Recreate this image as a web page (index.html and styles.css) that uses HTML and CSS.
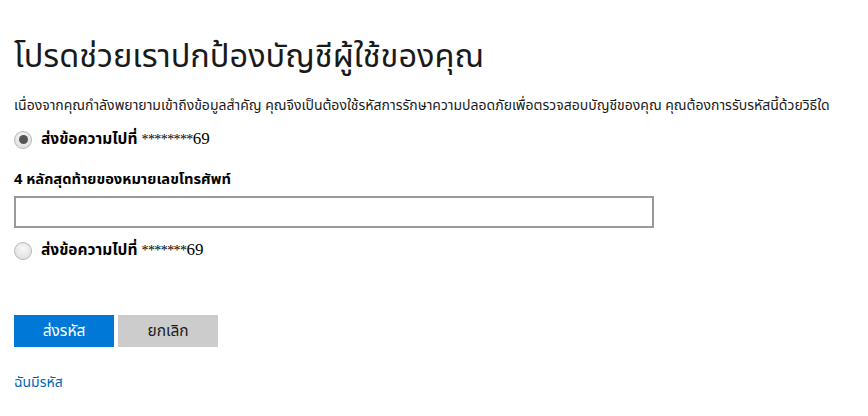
FILE: index.html
```html
<!DOCTYPE html>
<html lang="th">
<head>
<meta charset="utf-8">
<link rel="stylesheet" href="styles.css">
</head>
<body>
<main class="page">
  <h1 class="title">โปรดช่วยเราปกป้องบัญชีผู้ใช้ของคุณ</h1>
  <p class="desc">เนื่องจากคุณกำลังพยายามเข้าถึงข้อมูลสำคัญ คุณจึงเป็นต้องใช้รหัสการรักษาความปลอดภัยเพื่อตรวจสอบบัญชีของคุณ คุณต้องการรับรหัสนี้ด้วยวิธีใด</p>
  <label class="option option1">
    <span class="radio checked"></span>
    <span class="opt-text"><b>ส่งข้อความไปที่</b> <span class="num"><span class="stars">********</span>69</span></span>
  </label>
  <div class="field">
    <div class="field-label">4 หลักสุดท้ายของหมายเลขโทรศัพท์</div>
    <div class="input"></div>
  </div>
  <label class="option option2">
    <span class="radio"></span>
    <span class="opt-text"><b>ส่งข้อความไปที่</b> <span class="num"><span class="stars">*******</span>69</span></span>
  </label>
  <div class="buttons">
    <button class="btn primary">ส่งรหัส</button>
    <button class="btn secondary">ยกเลิก</button>
  </div>
  <a class="link" href="#">ฉันมีรหัส</a>
</main>
</body>
</html>
```
FILE: styles.css
```css
html, body {
  margin: 0;
  padding: 0;
  background: #fff;
}
body {
  font-family: "Noto Sans Thai", "Noto Sans", "DejaVu Sans", "Liberation Sans", sans-serif;
  color: #000;
}
.page {
  padding: 0 14px;
  display: flex;
  flex-direction: column;
  align-items: flex-start;
}
.title {
  margin: 34px 0 0;
  font-size: 32.5px;
  font-weight: 400;
  line-height: 48px;
  color: #1a1a1a;
}
.desc {
  margin: 14px 0 0;
  font-size: 14px;
  line-height: 20px;
  color: #1a1a1a;
}
.option {
  display: flex;
  align-items: center;
  gap: 9px;
  line-height: 20px;
}
.option1 { margin-top: 13px; }
.option2 { margin-top: 12px; }
.radio {
  width: 18px;
  height: 18px;
  box-sizing: border-box;
  border-radius: 50%;
  border: 1px solid #b8b8b8;
  background: radial-gradient(circle at 50% 35%, #f8f8f8, #dadada);
  display: flex;
  align-items: center;
  justify-content: center;
  flex: none;
}
.radio.checked::after {
  content: "";
  width: 9px;
  height: 9px;
  border-radius: 50%;
  background: #555;
}
.opt-text b {
  font-size: 15.5px;
  font-weight: 700;
}
.num {
  font-family: "Liberation Serif", serif;
  font-size: 17px;
}
.stars {
  font-size: 14px;
  letter-spacing: -0.6px;
}
.field {
  margin-top: 20px;
  display: flex;
  flex-direction: column;
  gap: 6px;
}
.field-label {
  font-size: 14.7px;
  font-weight: 700;
  line-height: 20px;
}
.input {
  width: 640px;
  height: 32px;
  box-sizing: border-box;
  border: 2px solid #999;
  background: #fff;
}
.buttons {
  margin-top: 54px;
  display: flex;
  gap: 4px;
}
.btn {
  width: 100px;
  height: 32px;
  border: none;
  font-family: inherit;
  font-size: 15.5px;
  padding: 0;
}
.primary { background: #0078d7; color: #fff; }
.secondary { background: #ccc; color: #1a1a1a; }
.link {
  margin-top: 26px;
  font-size: 14px;
  line-height: 20px;
  color: #0067b8;
  text-decoration: none;
}
```
